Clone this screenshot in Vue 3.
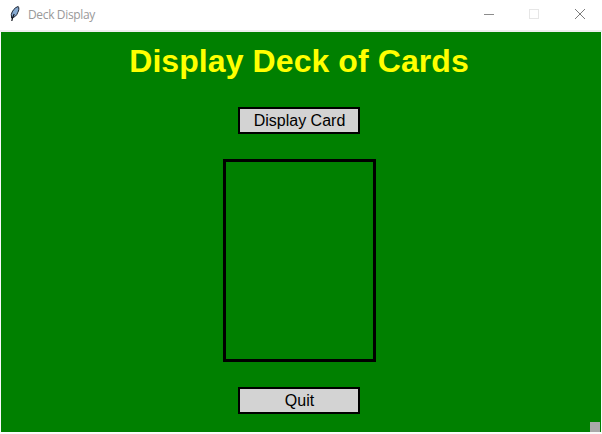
<script setup>
import { ref } from 'vue'

const windowTitle = ref('Deck Display')
const heading = ref('Display Deck of Cards')
</script>

<template>
  <div class="window">
    <header class="titlebar">
      <svg class="feather" width="12" height="18" viewBox="0 0 12 18">
        <path d="M9.200 1.500C6 2.200 3 6 2.300 9.500L2.600 13C6 12.300 8 10 8.600 7.800C10 5.500 10.300 3 9.200 1.500Z" fill="#86a9d0" stroke="#1a2230" stroke-width="1" />
        <path d="M5.200 9C4.200 11 3.200 13 2.800 16" fill="none" stroke="#10141c" stroke-width="1.200" />
      </svg>
      <span class="caption">{{ windowTitle }}</span>
      <div class="controls">
        <svg class="control" width="46" height="30" viewBox="0 0 46 30">
          <path d="M18 14.500H28" stroke="#8c8c8c" />
        </svg>
        <svg class="control" width="46" height="30" viewBox="0 0 46 30">
          <rect x="17.500" y="9.500" width="9" height="9" fill="none" stroke="#e6e6e6" />
        </svg>
        <svg class="control" width="46" height="30" viewBox="0 0 46 30">
          <path d="M17 9L27 19M27 9L17 19" fill="none" stroke="#7c7c7c" />
        </svg>
      </div>
    </header>
    <main class="table">
      <h1 class="heading">{{ heading }}</h1>
      <button class="button">Display Card</button>
      <div class="card"></div>
      <button class="button">Quit</button>
      <span class="grip"></span>
    </main>
  </div>
</template>

<style>
body {
  margin: 0;
  background: #ffffff;
}
</style>

<style scoped>
.window {
  box-sizing: border-box;
  width: 602px;
  height: 434px;
  padding: 0 1px 2px;
  background: #fafafa;
  overflow: hidden;
}

.titlebar {
  box-sizing: border-box;
  display: flex;
  align-items: flex-start;
  height: 32px;
  margin: 0 -1px;
  padding-left: 9px;
  background: #ffffff;
  border-bottom: 2px solid #eeeeee;
}

.feather {
  flex: none;
  margin-top: 5px;
}

.caption {
  margin: 7px 0 0 7px;
  color: #999999;
  font: 12px/16px "Open Sans", "Noto Sans", sans-serif;
  letter-spacing: -0.35px;
  white-space: nowrap;
}

.controls {
  display: flex;
  margin-left: auto;
  margin-right: -2px;
}

.control {
  display: block;
}

.table {
  position: relative;
  box-sizing: border-box;
  display: flex;
  flex-direction: column;
  align-items: center;
  height: 400px;
  padding: 11px 4px 0 0;
  background: #008000;
  font-family: "Liberation Sans", Arial, sans-serif;
}

.heading {
  margin: 0 0 28px;
  color: #ffff00;
  font-size: 32px;
  font-weight: 700;
  line-height: 36px;
  letter-spacing: 0.08px;
  white-space: nowrap;
}

.button {
  box-sizing: border-box;
  width: 122px;
  height: 27px;
  padding: 0 0 0 1px;
  border: 2px solid #000000;
  border-radius: 0;
  background: #d3d3d3;
  color: #000000;
  font: 16px/23px "Liberation Sans", Arial, sans-serif;
}

.card {
  box-sizing: border-box;
  width: 153px;
  height: 203px;
  margin: 25px 0;
  border: 3px solid #000000;
}

.grip {
  position: absolute;
  right: 1px;
  bottom: 0;
  width: 10px;
  height: 10px;
  background: #a9a9a9;
}
</style>
